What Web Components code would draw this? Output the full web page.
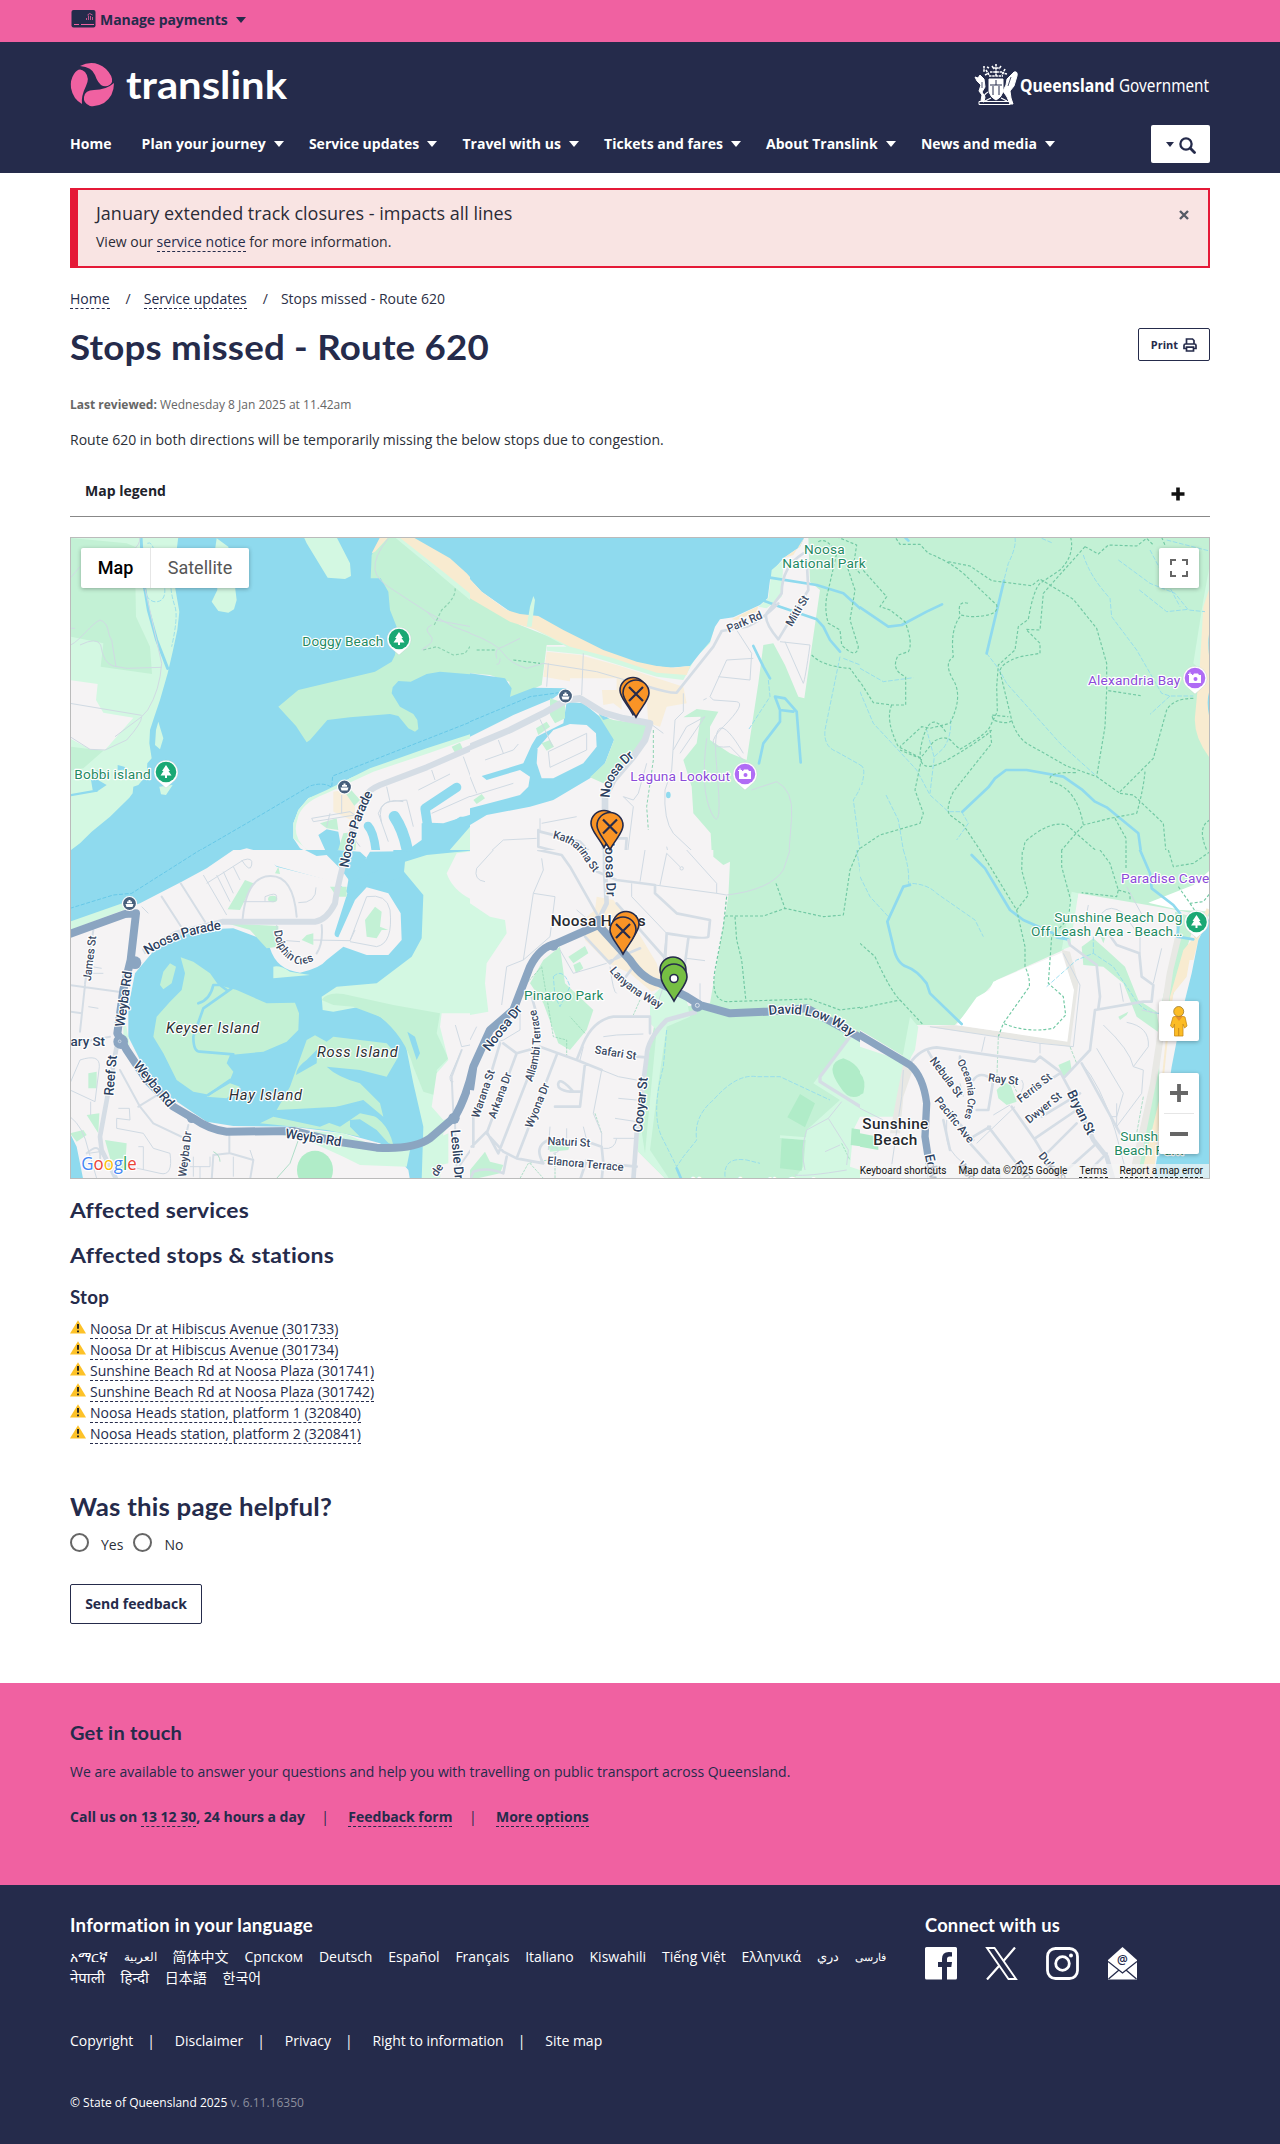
<!DOCTYPE html>
<html lang="en">
<head>
<meta charset="utf-8">
<title>Stops missed - Route 620 | Translink</title>
<style>
body{margin:0;background:#fff;color:#252b4b;font:14px/20px "Open Sans","Noto Sans",sans-serif}
</style>
</head>
<body>
<tl-topbar></tl-topbar>
<tl-header></tl-header>
<tl-alert><span slot="title">January extended track closures - impacts all lines</span>View our <tl-link>service notice</tl-link> for more information.</tl-alert>
<tl-page></tl-page>
<tl-contact></tl-contact>
<tl-footer></tl-footer>
<script>
const base = `*,:host{box-sizing:border-box}:host{display:block}.wrap{width:1140px;margin:0 auto}`;
function define(name, css, html){
  customElements.define(name, class extends HTMLElement{
    constructor(){
      super();
      this.attachShadow({mode:'open'}).innerHTML = `<style>${base}${css}</style>${html}`;
    }
  });
}

define('tl-link', `:host{display:inline;border-bottom:1px dashed #252b4b;color:#252b4b;cursor:pointer}`, `<slot></slot>`);

/* Heading whose glyphs are widened so that it spans the given width. */
customElements.define('tl-heading', class extends HTMLElement{
  connectedCallback(){
    const s=this.getAttribute('size'), lh=this.getAttribute('line');
    this.attachShadow({mode:'open'}).innerHTML=`<style>:host{display:block;font:700 ${s}px/${lh}px Lato,sans-serif;white-space:nowrap}span{display:inline-block;transform-origin:0 50%;letter-spacing:.2px}</style><span><slot></slot></span>`;
    const sp=this.shadowRoot.querySelector('span'), w=+this.getAttribute('span');
    sp.style.transform='scaleX('+(w/sp.getBoundingClientRect().width).toFixed(4)+')';
  }
});

define('tl-caret', `:host{display:inline-block;width:0;height:0;border:5px solid transparent;border-top:6px solid currentColor;border-bottom:0}`, ``);

define('tl-topbar', `:host{background:#f061a1;height:42px}
.wrap{display:flex;align-items:center;height:39px;font-weight:700;gap:4px;padding-left:1px}
svg{display:block;margin-top:-2px}tl-caret{margin-left:4px}span{letter-spacing:-.07px}`,
`<div class="wrap"><svg width="25" height="18" viewBox="0 0 25 18"><rect x=".5" width="24" height="17.500" rx="2" fill="#252b4b"/><path d="M3 14.500h5m2 0h13" stroke="#f061a1" stroke-width="1"/><path d="M15.500 10V8m2 2V5.500m2 4.500V6m2 4V7m-5-2q2-3 5 0" stroke="#f061a1" stroke-width=".8" fill="none"/></svg><span>Manage payments</span><tl-caret></tl-caret></div>`);

define('tl-logo', `svg{display:block;overflow:visible}`,
`<svg width="220" height="52" viewBox="0 0 220 52"><g fill="#f061a1">
<path d="M10 4Q24-3 36 7Q43 14 42 20Q40 25 33 24Q28 22 25 13Q22 5 10 4Z"/>
<path d="M4 12Q9 4 15 10Q20 16 16 24Q11 34 12 42Q3 37 1 26Q0 18 4 12Z"/>
<path d="M44 21Q44 34 34 41Q27 45 20 44Q13 41 14 35Q15 28 24 28Q36 28 44 21Z"/></g>
<text x="56" y="36.500" textLength="161" font-family="Lato" font-weight="700" font-size="39" lengthAdjust="spacingAndGlyphs" fill="#fff">translink</text></svg>`);

define('tl-qld-logo', `svg{display:block;overflow:visible}`,
`<svg width="237" height="44" viewBox="0 0 237 44"><g fill="#fff" stroke="#fff">
<path stroke-width="1" d="M2 15l3 1 2-3 4 4 1 8-3 5 3 5-1 5-3-1 1-6-3-4 2-6-4-4zM41 10q4-1 3 4l-3 10-4 5 1 7 2 6h-3l-3-7-4-6 3-6 1-6z"/>
<path d="M16 17h14v13q-2 6-7 8q-5-2-7-8z"/><path d="M16 14h14M17 10h12M20 6h7M23 2v12M13 8l3 5M32 7l-3 6M12 13l4-2M34 12l-5-1M19 4l2 3M28 4l-2 3M14 5l2 1M11 4v6" fill="none" stroke-width="1.600" stroke-dasharray="2.500 .7"/>
<path d="M15 30q-5 3-5 8M31 30q5 3 5 8M18 36l-6 3M28 36l6 3" fill="none" stroke-width="1.200"/>
<path d="M6 39.500h31v3h-31z" fill="none" stroke-width="1"/></g>
<path d="M17 23h12M23 18v5M20 24v9M26 24v9" stroke="#252b4b" stroke-width="1"/><path d="M9 20v6M38 15l-3 9" stroke="#252b4b" stroke-width=".8"/>
<g fill="#fff" font-family="'Noto Sans','Open Sans'" font-size="17.500"><text x="47" y="30" font-weight="700" textLength="94.500" lengthAdjust="spacingAndGlyphs">Queensland</text><text x="146" y="30" font-weight="400" textLength="90" lengthAdjust="spacingAndGlyphs">Government</text></g></svg>`);

define('tl-nav-item', `:host{display:flex;align-items:center;gap:8px;font-weight:700;white-space:nowrap}:host([plain]) tl-caret{display:none}`, `<slot></slot><tl-caret></tl-caret>`);

define('tl-header', `:host{background:#252b4b;color:#fff;height:131px}
.brand{display:flex;justify-content:space-between;padding-top:20px;height:83px}
nav{display:flex;align-items:center;height:38px}
.items{display:flex;gap:25.200px;flex:1}.items tl-nav-item:first-child{margin-right:5px}
.search{width:59px;height:38px;background:#fff;border-radius:2px;color:#252b4b;display:flex;align-items:center;justify-content:center;gap:5px}
.search svg{margin-top:3px}.search tl-caret{border-width:5px 4.500px 0}`,
`<div class="wrap"><div class="brand"><tl-logo></tl-logo><tl-qld-logo></tl-qld-logo></div>
<nav><div class="items"><tl-nav-item plain>Home</tl-nav-item><tl-nav-item>Plan your journey</tl-nav-item><tl-nav-item>Service updates</tl-nav-item><tl-nav-item>Travel with us</tl-nav-item><tl-nav-item>Tickets and fares</tl-nav-item><tl-nav-item>About Translink</tl-nav-item><tl-nav-item>News and media</tl-nav-item></div>
<div class="search"><tl-caret></tl-caret><svg width="17" height="17" viewBox="0 0 17 17" fill="none" stroke="#252b4b"><circle cx="7" cy="7" r="5.600" stroke-width="2.300"/><path d="M11.300 11.300l4.200 4.200" stroke-width="2.800" stroke-linecap="round"/></svg></div></nav></div>`);

define('tl-alert', `:host{padding-top:15px}
.box{height:80px;border:2px solid #e51937;border-left-width:8px;background:#f9e4e3;padding:11px 18px 0;display:flex;justify-content:space-between;color:#2b2b36}
.title{font-size:18px;line-height:24px;margin-bottom:7px}
svg{margin:9px 1px 0 0}`,
`<div class="wrap box"><div><div class="title"><slot name="title"></slot></div><div><slot></slot></div></div><svg width="10" height="10" viewBox="0 0 10 10"><path d="M1 1l8 8M9 1l-8 8" stroke="#555b66" stroke-width="2.400"/></svg></div>`);

define('tl-crumbs', `:host{display:flex;color:#2b2f45}i{font-style:normal;margin:0 13px 0 16px}`,
`<span><tl-link>Home</tl-link></span><i>/</i><span><tl-link>Service updates</tl-link></span><i>/</i><span>Stops missed - Route 620</span>`);

define('tl-button', `:host{display:inline-flex;align-items:center;justify-content:center;gap:5px;border:1px solid #252b4b;border-radius:2px;font-weight:700;color:#252b4b;white-space:nowrap;background:#fff}`, `<slot></slot>`);

define('tl-accordion', `:host{height:51px;border-bottom:1px solid #888;display:flex;align-items:center;justify-content:space-between;padding:0 25px 0 15px;font-weight:700;color:#20222b}svg{margin-top:5px}`,
`<slot></slot><svg width="14" height="14" viewBox="0 0 14 14"><path d="M7 .5v13M.5 7h13" stroke="#111" stroke-width="3.600"/></svg>`);

define('tl-stop', `:host{display:flex;height:21px;line-height:21px;gap:4px}svg{margin-top:2px}`,
`<svg width="16" height="14" viewBox="0 0 16 14"><path d="M8 .3L16 13.600H0z" fill="#fdc228"/><path d="M8 4v4.800M8 10.400v1.900" stroke="#222" stroke-width="1.900"/></svg><span><tl-link><slot></slot></tl-link></span>`);

define('tl-radio', `:host{display:flex;align-items:center;gap:12px}i{width:19px;height:19px;border:2px solid #666;border-radius:50%;display:block;margin-top:-2px}span{padding-top:3px}`, `<i></i><span><slot></slot></span>`);

/* Map canvas. Six tiles, each with its own units (3 per pixel). */
const tileNW=`<svg x="60" y="530" width="410" height="320" viewBox="0 0 1230 960">
<rect width="1260" height="990" class="w"/>
<path class="lg" d="M30 20H355L350 60 345 170 358 245 352 300 338 365 323 430 300 510 283 560 270 600 268 640 275 685 262 700 260 735 235 765 220 770 218 790 208 803 150 860 95 905 60 940 30 962Z"/>
<path class="p" d="M30 24L200 40 235 55 225 100 228 260 270 350 276 432 122 410 130 340 30 320ZM30 650L130 662 70 715 30 722Z"/>
<path class="l" d="M30 450L113 462 108 510 130 548 220 563 135 660 90 658 30 625Z"/>
<path class="lg" d="M470 25L505 50 525 170 530 210 522 238 505 248 475 243 455 215 472 180 465 60ZM732 22H830L870 100 873 138 855 147 803 143 740 40ZM295 575L310 625 300 658 285 645 288 600ZM298 770L338 765 318 795 303 793Z"/>
<path class="w" d="M173 705l20 5 10 12-15-3-15 2zM110 720l20 10 15 5-40 10 35 20-30 20-12-5-5-30z"/>
<path class="r" d="M243 20L250 150 265 240 290 330 323 415" style="stroke-width:9"/><path class="r" d="M30 796L110 782" style="stroke-width:7"/>
<path class="cr" d="M262 40q20-10 25 60l25 60q10 50-20 55-30 5-45-50M333 175Q335 200 345 230T335 350"/>
<path class="t" d="M32 345C62 330 95 280 120 270 150 280 140 310 155 330L168 410M60 345Q110 320 122 345 130 400 160 408L200 415 305 412M30 295h15M32 143L60 110M240 20Q240 50 215 60M255 175L305 400Q300 480 263 540L245 560 165 620M245 560Q245 580 200 630L135 660 90 658 30 620M30 520L245 556"/>
<path class="p" d="M960 25L935 75 932 145 962 145 985 185 990 240 1010 290 1010 340 1005 375 995 395 945 425 715 480 655 530 708 588 740 637 750 630 802 570 870 562 990 552 1015 558 1045 595 1065 605 1075 597 1072 570 1060 552 1020 530 995 490 998 472 1015 453 1052 455 1100 432 1140 425 1260 435V225L1110 110 1010 22Z"/>
<path class="lg" d="M1005 22L1260 235V210L1110 90 1025 22Z"/><path class="s" d="M1018 22H1060L1170 85 1220 130 1260 175V215L1150 125ZM960 22L935 70 945 65 985 22Z"/>
<path class="t" d="M985 25Q940 80 945 120 950 150 1000 180L1100 245 1180 290 1260 320M1100 245L1125 270 1260 295M1115 285q-25 10-5 30t-20 40q-10 10 10 0"/>
<path class="tr g" d="M1185 175Q1190 200 1145 240L1120 290M1090 360L1130 350 1180 375 1215 370 1230 350 1260 370"/>
<path class="l" d="M1260 610L1100 660 930 720 870 745 800 785 745 805 715 840 700 880V925L720 955 768 980 800 970 775 915 800 898 835 905 850 990H1000L1200 860H1260Z"/>
<path class="lg" d="M1260 603L1100 655 930 715 800 780 745 805 715 840 700 880V925L768 980Q690 930 712 870 720 820 800 790L940 725 1110 668 1260 615Z"/>
<path class="p" d="M865 770L900 810 880 830 850 790ZM780 880L830 865 835 900 800 895ZM850 910L890 905 885 990H825ZM1175 650L1200 638 1208 655 1185 668Z"/>
<path class="c" d="M820 785L850 780 885 830 885 875 820 845Z"/>
<g fill="none" stroke="#8fdaee" stroke-linecap="round" stroke-linejoin="round"><path d="M924 888Q945 910 950 990" stroke-width="26"/><path d="M1003 860Q1030 900 1042 960" stroke-width="34"/><path d="M1190 772L1095 835 1105 900" stroke-width="28"/></g>
<path class="w" d="M1085 880L1110 878 1150 880 1260 845V895L1180 965 1060 990H935L965 965 1000 968 1050 955 1085 930Z"/>
<path class="lg" d="M1230 890L1260 880V990H1050L1165 965Z"/><path class="l" d="M490 990L510 968 560 955 600 965 650 990Z"/>
<path class="t" d="M755 865L870 845 885 855 760 875ZM810 850L800 890M845 795V850M980 770L990 815M965 880Q950 820 990 815L1040 810 1060 890M985 935L955 850Q970 800 1030 815M1210 680L1250 790 1115 850M1115 720L1125 750M1075 780L1170 732M870 910L900 950"/>
<path class="rd" d="M1260 642L1100 712 960 765Q925 780 915 800L870 920V990"/>
<path class="fe" d="M370 990L560 880 750 768Q790 755 815 772L818 738 1260 565"/></svg>`;

const tileN=`<svg x="470" y="530" width="390" height="320" viewBox="0 0 1170 960">
<rect width="1260" height="990" class="l"/>
<path class="p" d="M0 195L60 230 150 285 300 345 230 345 215 465 140 500 120 500 118 455 60 435 0 430Z"/><path class="lg" d="M0 195L170 285 290 350H230V362L350 375 560 440 640 450 740 268 720 340 640 420 550 420Z"/>
<path class="w" d="M0 22H1003L990 50 940 85 915 115 900 150 893 205 870 225 790 262 750 268 735 290 720 335 690 370 660 408 600 413 520 405 400 370 270 320 150 265 35 185 0 148Z"/>
<path class="s" d="M0 148L35 185 110 240 150 252 205 258 280 300 400 360 500 395 560 408 610 413 660 408 650 435 560 428 430 385 300 350 200 300 120 275 60 240 0 205ZM1003 22L970 75 940 85 990 50ZM785 268L865 228 860 245 800 270Z"/>
<path class="lg" d="M190 198L195 210 185 290H170L180 230ZM895 205L905 120 940 90 935 200 890 235 865 230Z"/>
<path class="c" d="M230 365L330 375 440 405 640 470 650 520 590 530 570 590 535 580 530 510 480 500 470 550 430 520 400 525 395 470 220 440Z"/><path class="l" d="M300 445L440 445 440 480 300 480ZM455 510H530V550H455Z"/>
<path class="w" d="M0 430L105 445 125 475 120 500 190 473 290 475 250 505 130 555 0 620Z"/>
<path class="w" d="M290 515L340 520 390 560 425 590 432 630 405 700 360 745 250 810 180 830 50 855 0 885V835L150 795 175 770 180 740 150 720 50 750 35 738 160 700 185 645 200 620 280 580Z"/>
<path class="l" d="M250 600L300 582 350 585 378 610 380 650 340 700 250 745 215 745 200 700 203 655Z"/>
<path class="p" d="M385 555L430 570 540 585 490 690 400 760 360 742 405 700 432 630ZM240 505L285 520 285 565 255 580 240 555ZM198 595L230 575 240 590 205 615ZM215 640L240 630 252 650 230 662ZM10 810L35 792 45 805 20 822Z"/>
<path class="w" d="M385 550L400 557 418 565 400 570Z"/>
<path class="p" d="M1015 22H1260V990H750L725 965 722 910 670 850 665 770 640 690 680 640 692 560 640 562 680 537 745 545 720 590V630L780 670 830 690 865 460 880 345 910 340 945 405 985 500 1003 505 1050 180 1020 155Z"/>
<path class="r" d="M895 142L1040 165 1120 190 1170 235 1260 292M875 210L930 230 1040 268 1060 290 1080 330 1110 365M850 348L880 410 900 445M915 500L945 505 980 545 992 697M915 500L930 540V575L880 640 867 700M930 540L970 545"/>
<path class="cr" d="M1110 380L1065 600Q1060 650 1100 665L1180 710Q1190 750 1150 810L1170 960M895 450L900 500 835 600M1120 385L1260 440"/>
<path class="tr" d="M1045 35Q1070 20 1100 70L1075 180Q1060 230 1075 280L1110 300 1115 345Q1160 390 1165 350L1140 270 1155 180 1125 90M1100 20L1160 45 1150 110 1200 160M1025 375Q1060 410 1140 415L1215 520 1260 525M1150 980Q1180 930 1260 905M20 360H80M130 390L210 400"/>
<path class="t" d="M0 310Q80 340 100 370T170 415L220 400M80 385q-10-30 20-35l50-25M90 385q0 20-10 18M235 400L230 470M340 370L335 495M800 300L845 370 840 450 745 440M770 390L850 385M770 390L720 500 730 510 800 515Q830 520 760 590T780 650L830 700M880 345M945 335L1000 460Q1005 450 1020 345L930 335M640 490L640 545 615 570 605 720 585 780Q580 870 610 910L690 985M610 660L650 590 705 560 630 670M530 700L505 790 490 810 460 800 490 830 470 990M210 865V905M215 880L320 860M45 980L100 930 200 925M700 510L710 505M235 665L350 610V660L240 712ZM210 568L248 650M45 690L130 660 145 642M0 740L20 790M85 630L100 670M0 800L130 760M845 780L920 755Q970 780 965 860L955 990M710 625Q690 780 725 850T740 710 820 670M540 580L580 610M590 950L600 990"/>
<path class="g" d="M550 600V690L530 830 535 900" fill="none" stroke-dasharray="9 6" stroke-width="3"/>
<path class="rm" d="M1000 70Q935 110 935 190L890 250Q880 275 925 328L1015 180 1010 90M925 220Q870 275 830 290L755 303 730 350 620 488Q600 490 535 470M210 905L330 935 390 1000M205 900V950L280 970 300 990M330 935M400 925H470L465 990"/><path class="t" d="M535 470L380 425 220 400"/>
<path class="rd" d="M-10 655L120 600 220 550 290 510 330 505 400 548 460 565 540 580 525 630 490 680 430 750 405 800V990" style="stroke-width:20"/>
<path class="fe" d="M0 575L180 500 290 485"/><ellipse cx="595" cy="795" rx="7" ry="10" class="w"/></svg>`;

const tileNE=`<svg x="860" y="530" width="360" height="320" viewBox="0 0 1080 960">
<rect width="1080" height="990" class="p"/>
<path class="lg" d="M1050 100L1030 210 1000 400 1020 420 1050 300Z"/><path class="s" d="M1050 170L1030 230 1020 400 1005 560Q1000 620 1050 685Z"/><path class="w" d="M1050 300Q1040 330 1050 400ZM1050 480Q1036 510 1050 570Z"/>
<path class="r" d="M0 232L85 290 125 285 200 245 246 223M432 152L380 370M307 845L385 772 405 745 438 720H500L610 740 665 778 705 815 740 832 835 910 842 960 860 1000M135 22L145 32"/>
<path class="cr" d="M465 22Q470 50 445 100L432 150M380 370L415 415 440 460 600 640 720 748M670 75Q690 140 750 205L755 260 830 360 905 490 930 498H1000M930 498L870 553M775 90L870 160 945 190 985 240 1035 245M838 180L920 245 985 238M0 485L40 580 110 655 170 720 210 795 265 845H305L325 880 290 930M272 568Q275 620 250 655L223 680 210 790M222 680L200 600M0 415L70 455 160 443M0 705Q20 710 5 765M78 795L115 870 135 990M920 30L1045 62M870 60L960 230M545 25L575 38"/>
<path class="tr" d="M108 25L120 43H180L205 70Q260 90 310 130L410 225Q420 260 330 260L300 255Q290 210 325 220M265 95L330 108 395 152 515 167 540 147 640 208 710 295 740 400V480L735 590 710 740M745 482L842 497M632 22Q645 75 600 120L540 160Q520 180 505 268L475 290 465 360 415 405 410 470 412 545 390 590Q380 610 330 640L300 658 280 640Q260 610 220 635 190 675 180 685L120 660M675 50L715 72 745 45 830 48 860 25 880 45M675 50L630 100 550 190 540 300 498 298 540 340V370L480 380Q420 400 420 425L455 570Q470 620 500 640L620 708 710 740 780 790M455 572Q440 585 400 570L395 555 445 560M395 600Q380 620 270 685T185 640 260 610M390 600L395 640 280 785Q255 840 270 855L310 885 380 990M0 110L80 200 60 230 90 240 135 275Q160 340 145 365L115 375Q90 420 137 440V525L95 525 40 518 0 455M95 525Q75 570 115 650L185 685 165 780 190 850 180 880 60 915 0 955M300 260Q270 300 280 380 250 400 280 450T270 580L210 595 185 590 120 650M1000 505Q940 505 920 540L880 685 780 785M780 790L820 795 910 880 920 990M855 725Q850 780 830 850L750 865 670 885M570 745Q570 725 650 728M570 755Q650 770 670 885L605 960V990M485 990L495 935Q570 870 620 885L700 955 745 990M765 865L798 925V990M1050 870Q1010 890 1040 960L1005 990M905 22L915 45"/></svg>`;

const tileSW=`<svg x="60" y="850" width="410" height="340" viewBox="0 0 1230 1020">
<rect width="1260" height="1020" class="l"/>
<path class="w" d="M0 0H520L440 55 365 95 240 160 30 235V0ZM30 850L50 890 72 1000H30Z"/><path class="lg" d="M30 215L200 155 230 165 30 240Z"/>
<path class="w" d="M600 0H1260V990H1050L1045 960 1000 910 960 880 850 850 700 830 520 828 440 815 380 775 300 720 245 640 205 560 205 470 225 370 300 280 390 240 520 235 600 265 630 295Q650 360 720 368 780 355 800 330L850 290 920 315 985 315 1025 270 1022 190 985 130 920 112 885 150 835 262Q820 260 825 245L862 130 830 95 770 80 650 50Z"/>
<path class="l" d="M560 0L650 48 830 98 860 120 870 60 940 10 1000 10V0Z"/>
<path class="w" d="M735 0L770 18 800 15 845 60 870 95 960 60 900 5 830 0ZM930 5L1070 3 1170 0 1180 25 1000 90 860 120Z"/>
<path class="lg" d="M1250 0L1100 15 1035 35 1032 65 1090 135 1085 265 1055 320 950 400 830 410 785 440 788 480 820 485 900 470 960 500 1030 550 1060 700 1090 830 1085 990H1260V0Z"/>
<path class="p" d="M785 450Q800 425 850 432L1000 465 1140 490 1130 550 1165 625 1130 660 1140 740 1090 725 1060 650Q1035 560 960 500L880 470 820 465Z"/>
<path class="l" d="M1260 0L1190 10 1160 70Q1180 130 1260 160ZM1260 490L1145 490 1140 530 1165 630 1130 670 1115 770 1150 810 1190 800 1150 850 1140 990H1260Z"/><path class="lg" d="M1120 870L1165 850 1165 940 1120 950ZM640 835L850 850 950 890 1050 900 1040 950 900 945 850 920 740 870 640 850Z"/>
<path class="p" d="M362 322L400 335 450 370 475 405 530 420 620 460 705 458 717 490 715 540 680 575 610 605 510 615 500 640 520 665 510 690 440 733 400 725 350 690 310 610 280 560 290 500 330 455 365 420 375 370ZM330 340L348 350 335 400 310 418 300 405 310 365Z"/>
<path class="p" d="M440 740L510 700 540 710 500 745ZM650 780L690 710 740 570 765 556 800 575 820 560 980 580 1015 620 980 680 900 660 800 650Q830 680 900 700L960 760 970 800 910 750 830 770 750 775ZM600 820L640 800 780 830 900 780Q980 800 1000 885L940 860 870 810 870 830 900 860 800 840Z"/>
<path class="w" d="M708 675Q710 650 740 630L772 598 770 640ZM780 800L830 770 910 765 970 805 900 790 840 830 810 820ZM868 810L900 808 950 840 990 885 900 850ZM1042 545L1065 560 1080 610 1070 630Z"/>
<path class="r" d="M515 415L430 475 400 560Q400 605 420 605L520 613M500 420L480 405H460Q450 450 415 460M510 690L445 735"/>
<path class="p" d="M555 90L580 100 540 180 503 178ZM655 50L645 70 660 72ZM500 220L655 228 655 290 620 295 570 240ZM740 255L760 250 760 285 725 270ZM810 110L860 110 860 140 830 140ZM945 170L965 185 960 230 985 240 965 240 950 265 920 260 915 210ZM85 670L110 665 110 715 85 715ZM80 795L118 790 115 850ZM135 870L200 880 195 960 160 960ZM30 850L70 840 80 855 50 875Z"/><ellipse cx="638" cy="147" rx="14" ry="10" class="p"/><ellipse cx="765" cy="960" rx="54" ry="58" class="dg"/><path class="lg" d="M640 385L640 350Q660 345 690 365L750 375ZM190 480L210 590 190 560Z"/>
<path class="rm" d="M305 140L362 228M362 100L435 215M548 205Q560 80 630 78T710 200M75 405L60 545M30 405L175 425M75 400L100 240M30 485L65 490M785 225Q790 280 770 310M120 930Q125 870 80 910M180 660L240 770 280 820 385 870M150 560L45 580M235 770L300 730M385 825L375 870M508 855V910L460 915 455 990M510 910L580 930 570 990M1205 600L1175 680 1180 790M1185 820L1190 960 1260 860" style="stroke-width:6"/>
<path class="t" d="M245 170L265 190M430 75L500 195M440 100L550 30Q580 20 575 45T545 30M470 75L510 155M490 65L520 130M520 50L540 90M550 155H640Q650 155 650 140T615 140V155M715 158Q770 160 768 112M650 225L655 270 720 275M760 270L870 272 920 140Q980 130 990 180 1000 280 950 290L870 275M870 272L885 240 M95 350L125 355M85 470L115 475M75 370L130 370M30 700L60 630Q120 610 118 650L105 755 30 720M92 755V795M30 800Q70 830 85 900L110 985M85 910L120 905 170 990M175 775H208L210 810 170 805 170 835 250 850 280 895 330 910Q340 980 300 970L210 950M235 890H250V960M400 920V980M390 950H450V920M420 985V950M520 920V980M570 900L580 930M1186 525L1205 590 1230 585 1260 540M1205 600L1170 680Q1170 700 1180 695M1240 45Q1250 80 1260 90"/>
<path class="rd" d="M848 50Q830 120 825 160 800 210 765 215H490L350 250 250 305" style="stroke-width:18"/><path class="rd" d="M170 590L120 860 125 900 170 990" style="stroke-width:14"/>
<path class="hw" d="M20 255L195 192 228 190 212 330 190 420 172 550 200 600 260 690 340 770 400 805Q450 840 500 845L700 843 830 875 950 893Q1060 900 1110 865L1185 800Q1220 740 1240 650L1260 600"/>
<circle cx="225" cy="338" r="19" class="h"/><circle cx="182" cy="575" r="22" class="h"/><circle cx="395" cy="805" r="14" class="h"/><circle cx="1182" cy="805" r="17" class="h"/><circle cx="179" cy="574" r="4" fill="none" stroke="#dde5ee" stroke-width="2"/>
<path class="g" d="M650 985L690 940 715 870M460 905q20 10 20 30" fill="none" stroke-width="2"/>
<path class="fe" d="M30 175L160 135 215 130 420 0"/></svg>`;

const tileS=`<svg x="470" y="850" width="390" height="340" viewBox="0 0 1170 1020">
<rect width="1260" height="1020" class="l"/>
<path class="lg" d="M0 160L60 200 105 210 110 250 50 340 45 400 55 485 0 495Z"/>
<path class="p" d="M730 0H1260V990H590L505 905 510 780 540 590 570 440 640 470 720 460 775 140 780 35 760 45 730 20ZM270 290L285 400 370 480 350 540 300 600 265 580 220 460 180 400 220 330ZM0 960L45 905 60 935 100 945 90 970 0 990Z"/>
<path class="lg" d="M525 910L560 540 540 520 540 450 600 420 650 450 660 500 590 530 565 700 540 900 600 990H590L505 905V780ZM575 410L620 430 655 465 650 490 570 480 540 500 545 440ZM1150 550L1260 620V990H970L1000 950 1010 840 1110 750 1030 700Z"/>
<path class="l" d="M1230 790L1170 800 1150 840 1140 950 1260 990V780Z"/>
<path class="dg" d="M990 732L1035 760 1005 832 952 802ZM935 865L1003 870 995 962 930 955ZM1145 835L1260 850V900L1142 885ZM1120 625Q1190 650 1180 730 1140 760 1110 710 1060 640 1120 625Z"/><path fill="none" stroke="#d3f8e2" stroke-width="8" d="M930 860L1008 866M1045 690L1110 745"/>
<path class="p" d="M295 320L345 288 355 310 310 340ZM310 345L330 335 340 355 318 370ZM235 885L300 885 295 900 240 905Z"/>
<path class="c" d="M345 205L375 180 380 140 430 150 470 200 500 240 560 340 580 410 545 425 480 370 415 340 345 270Z"/>
<path class="cr" d="M590 540L580 650Q540 800 580 870L620 950 640 920 680 870Q670 800 730 750 800 670 860 680L930 680 1080 750M250 380Q280 350 300 410L270 470 255 440ZM765 980Q760 920 830 930L870 940M1160 0L1180 120 1250 210"/><path class="r" d="M620 955L635 990"/>
<path class="tr" d="M770 140L760 230 735 360Q720 450 770 455L1020 447 1110 480 1260 460M765 198H880L945 175 1060 200 1120 195 1140 60 1165 0M918 100L945 175M795 200L800 270 815 330 828 455"/><path class="g" d="M290 620V570L250 560 215 350 170 400M345 550L300 500M510 450L490 495M150 985L175 940 235 930 M255 910V985M375 790L395 850M180 940L220 985M1115 880L1140 930" fill="none" stroke-width="2" stroke-dasharray="8 3"/>
<path class="t" d="M770 135Q900 120 940 60L960 0M770 135L740 130 555 105M215 25L220 60 190 130 160 330 110 350 95 465M190 130L255 140 240 260 160 330M45 95Q10 90 20 55L70 0M485 100V140L590 250M590 250L580 330M525 0L510 95M570 105L590 10 630 50M650 0L740 100V130M320 180L440 280M270 300L310 370 410 340M420 350Q430 430 440 430M650 325L705 332M400 560L440 555 520 552M395 660L445 680 500 690M395 660L370 790 395 850V900M445 745L500 750M435 805L500 815M240 830L235 900M290 835V870M340 830L350 870M440 865Q435 900 400 895M430 865H500M340 590L330 630M580 410L560 470M690 400V460M975 975Q1010 980 1130 960M1010 840Q990 900 1005 960M1010 840L1075 805 1115 755M1075 805L1135 900 1130 945M1065 905L1110 885M150 480V540L100 570 40 590M0 570L20 530M245 900q0-15 15-5t-10 15"/><circle cx="635" cy="55" r="5" fill="none" stroke="#d0dae3" stroke-width="3"/>
<path class="rm" d="M205 0L275 15 300 50 385 200M370 60L440 90 555 105 555 130 620 190 720 210 715 260Q710 270 590 250L585 340M655 265L645 340M440 160L590 330M345 260L420 340 470 290M415 335L510 295M490 350L460 390M185 440L205 510M100 580L140 610 210 590 320 630 340 580Q370 510 430 500L540 500 540 550M320 630L395 660M140 610L50 850 100 905 140 925 260 615M345 640L330 770 255 770M330 725L300 725Q260 720 265 700T310 725M5 890L50 845 85 910 210 590M140 925L220 940Q190 890 235 870M365 880L395 890 400 940 395 990M400 940L500 950M500 620L530 622M350 930L330 990M0 990L10 965Q50 950 100 970L110 920M10 890V800M90 580L30 780"/>
<path class="rd" d="M405 0V60L410 160 385 210M490 990L500 850 530 620Q530 570 590 510L680 485" style="stroke-width:14"/><path class="rd" d="M1140 560L1050 680V695L1260 825" style="stroke-width:10"/>
<path class="hw" d="M0 720L10 650 60 540 130 480 180 350Q210 290 260 280L385 225 480 330Q520 390 570 400L650 440 690 465 780 490 890 485 1010 475 1130 540 1260 615"/><circle cx="385" cy="215" r="18" class="h"/><circle cx="250" cy="287" r="15" class="h"/><circle cx="682" cy="467" r="18" class="h"/><circle cx="682" cy="466" r="6" fill="#8ba5c1" stroke="#fff" stroke-width="2"/></svg>`;

const tileSE=`<svg x="860" y="850" width="360" height="340" viewBox="0 0 1080 1020">
<rect width="1080" height="1020" class="l"/>
<path class="p" d="M0 0H1050V200L950 180 655 130 610 300 410 390 285 525 165 525 150 630 0 540Z"/>
<path class="lg" d="M150 500L175 530 165 600 145 635 125 635ZM635 125L655 130 630 290 605 300ZM0 590L150 640 130 720 100 800 0 800Z"/><path class="dg" d="M0 670Q20 690 10 730L0 735ZM0 850L55 860V900L0 890Z"/><path fill="#e8e8e4" d="M130 640L165 640 130 740 120 850H90L110 740ZM605 300L630 305 655 400 630 590 200 530 280 525 610 570 640 420Z"/>
<path fill="#fff" d="M865 158L1000 105 1050 60V185L960 180ZM400 395L605 308 642 420 622 575 290 525 350 442 388 420Z"/>
<path class="p" d="M665 290L700 265 740 300 795 350 835 450 890 485 900 550 830 500 790 400 730 350 670 345ZM945 185L1010 205 985 280 935 450 900 550 900 480 930 350 950 250ZM595 645L630 630 635 660 610 680ZM410 720L430 700 450 700 470 755 440 765 415 745ZM895 540V620L870 750 810 990H850L900 750ZM775 500L805 485 800 495 780 510ZM720 255L735 265 730 280Z"/>
<path fill="#e8e8e4" d="M945 260L965 260 940 360 900 640 830 990H805L870 700 900 500 920 370Z"/>
<path class="s" d="M1000 265L980 380 940 430 920 600 880 990H840L900 740 930 440 970 300Z"/><path class="s" d="M1050 180L1015 270 1000 330H970L1000 265 1040 175Z"/>
<path class="w" d="M1050 200L1015 270 995 370 970 470 935 650 915 780 880 990H1080V190Z"/>
<path class="r" d="M335 15L375 55 450 180 490 210 620 268M840 0L870 70 875 115 940 165 960 190 952 260 1000 268M150 105L130 110 82 215 100 290Q110 340 140 350T200 400L210 430 305 522M590 262L625 268"/>
<path class="cr" d="M0 80L30 140 85 200M130 0Q150 60 145 100 200 100 230 130L345 210 370 260M560 410L650 330 700 310 760 350 820 440Q850 490 900 490M700 310V260"/>
<path class="tr" d="M0 280L45 320Q90 420 120 450L190 525M0 475L120 450M360 0L470 180 495 290V350Q510 380 508 410L430 520 415 560M470 180L505 135 485 60 487 0M605 0V50L632 150 625 205 575 260 565 400 610 440 617 495 580 535Q500 550 430 520M720 0L750 40 775 120 770 140 665 128M798 0V60M775 120L810 130V150M925 0L940 50 1000 40 1050 5M955 110L990 160 1030 155 1050 130M990 160L1010 190"/>
<path class="g" d="M415 560L410 700M630 590L650 640M460 705l10 20M850 740L830 850" fill="none" stroke-width="2" stroke-dasharray="10 4"/>
<path class="t" d="M210 530L540 580 640 590 660 405 610 310M375 560L365 605M540 580V610M685 165L670 240 680 260M725 190Q750 160 790 190L840 260V310M905 295L880 400M780 400L790 455M800 110L860 220M730 525Q810 600 820 650L850 660 845 730 770 830 770 760M820 650L865 590Q870 530 800 517M665 640Q720 700 765 840L805 990M710 595L790 730 770 800M300 700L310 740M485 690Q500 710 470 745M130 660L125 740 90 980M260 810V860Q260 900 310 940M400 795L450 765M465 770L350 880M770 800h-15M845 480L890 490M0 775L70 810"/>
<path class="rm" d="M150 640Q180 595 230 592L525 635 540 620 600 665 635 730M615 680L690 600 705 480 850 455 875 455 880 405 845 380 838 310 770 285 745 250M625 270L630 285 710 345 720 440 715 475M665 640L780 850M205 605L240 665M240 750L340 870M300 620V650M340 690Q360 660 400 690L385 780H350M455 770L525 870 555 920M600 670L480 745M660 730L545 800M650 780L525 865M650 820L560 910M710 880L620 960M740 910L660 990M385 830L500 980M340 860L390 830 M310 940L340 980M330 880L420 980M250 810L270 900"/>
<path class="rd" d="M635 730L700 870 740 920 760 990" style="stroke-width:14"/>
<path class="hw" d="M-10 550L150 645Q190 680 200 760L195 860 215 990" style="stroke-width:22"/></svg>`;

const mapCss=`:host{height:642px;border:1px solid #bbb;position:relative;overflow:hidden;background:#c3f1d5;font-family:Roboto,sans-serif}
.canvas{display:block}.w{fill:#8fdaee}.l{fill:#f5f3f4}.p{fill:#c3f1d5}.lg{fill:#d3f8e2}.dg{fill:#b0ecc8}.s{fill:#f8ebd0}.c{fill:#f8eedb}.h{fill:#8ba5c1}
.r,.cr,.t,.rm,.rd,.hw,.tr,.fe{fill:none;stroke-linejoin:round}.r{stroke:#8fdaee;stroke-width:8;stroke-linecap:round}.cr{stroke:#8fdaee;stroke-width:2.500;stroke-dasharray:14 5}
.t{stroke:#d0dae3;stroke-width:3}.rm{stroke:#d5dde5;stroke-width:8;stroke-linecap:round}.rd{stroke:#d5dde5;stroke-width:18}.hw{stroke:#8ba5c1;stroke-width:24}
.tr{stroke:#72c9a4;stroke-width:3.500;stroke-dasharray:9 6}.g{stroke:#8dd3b2}.fe{stroke:#5fc4e6;stroke-width:2.500;stroke-dasharray:12 5}
text{paint-order:stroke;stroke:#fff;stroke-width:7px;stroke-linejoin:round;font-size:36px;fill:#3c4a63;font-weight:500}
.poi{font-size:41px;fill:#1f8a63;font-weight:400}.pur{font-size:41px;fill:#8b4bd8;font-weight:400}.isl{font-size:44px;font-style:italic;fill:#2a2f33;font-weight:400}.town{font-size:46px;fill:#26292f}.b{font-size:40px;fill:#2c4160}.sm{font-size:34px}
.ui{position:absolute;background:#fff;box-shadow:0 1px 4px rgba(0,0,0,.3);border-radius:2px}
.types{left:10px;top:10px;height:40px;display:flex;align-items:center;font-size:18px}.types span{display:flex;align-items:center;justify-content:center;height:40px}.types span:first-child{width:70px;color:#000;font-weight:500;border-right:1px solid #e6e6e6}.types span:last-child{width:98px;color:#565656}
.full{right:10px;top:10px;width:40px;height:40px}.peg{right:10px;top:463px;width:40px;height:40px}.zoom{right:10px;top:535px;width:40px;height:81px}.ui svg{display:block}
.legal{position:absolute;right:0;bottom:0;height:14px;display:flex;background:rgba(245,245,245,.7);color:#111;font-size:10px;line-height:14px;padding:0 6px 0 0;gap:12px;white-space:nowrap}.legal u{text-decoration:none;border-bottom:1px dashed #222;height:14px}`;

const pin=(x,y,c,kind)=>`<g transform="translate(${x} ${y})"><path d="M0 0C-6-11-13-17-13-24A13 13 0 0 1 13-24C13-17 6-11 0 0Z" fill="${c}" stroke="#252b4b" stroke-width="1.600"/>${kind==='x'?'<path d="M-7-30L7-16M7-30L-7-16" stroke="#252b4b" stroke-width="2.200"/>':kind==='o'?'<circle cy="-22.500" r="4" fill="#fff" stroke="#252b4b" stroke-width="1.600"/>':''}</g>`;
const spot=(x,y,c,tree)=>`<g transform="translate(${x} ${y})"><path d="M0 16L-7 10A12 12 0 1 1 7 10Z" fill="#fff" stroke="#9aa" stroke-opacity=".3" stroke-width=".7"/><circle r="10.300" fill="${c}"/>${tree?'<path d="M0-7L4-1H2.500L5.500 3.500H1V6H-1V3.500H-5.500L-2.500-1H-4Z" fill="#fff"/>':'<path d="M-6-3H-2L-1-4.500H3L4-3H6V5H-6Z" fill="#fff"/><circle cx=".5" cy="1" r="2" fill="'+c+'"/><path d="M-7-3.500h4M-5-5.500v4" stroke="#fff" stroke-width="1.200"/>'}</g>`;
const ferry=(x,y)=>`<g transform="translate(${x} ${y})"><circle r="7" fill="#48607c" stroke="#fff" stroke-width="1.200"/><path d="M-4 .5H4L3 3.500H-3ZM-2.500-.2V-2H-1V-3.500H1V-2H2.500V-.2" fill="#fff"/></g>`;

const labels=`<g transform="translate(60 530) scale(.33333)">
<text class="poi" x="727" y="348" textLength="243">Doggy Beach</text><text class="poi" x="43" y="747" textLength="229">Bobbi island</text>
<path id="p0" d="M866 1014Q882 900 940 788" fill="none"/><text class="b"><textPath href="#p0" textLength="236">Noosa Parade</textPath></text></g>
<g transform="translate(470 530) scale(.33333)">
<text class="poi" x="1002" y="72" textLength="122">Noosa</text><text class="poi" x="937" y="115" textLength="250">National Park</text>
<text class="sm" transform="translate(776 308) rotate(-23)" textLength="112">Park Rd</text><text class="sm" transform="translate(965 292) rotate(-59)" textLength="102">Mitti St</text>
<path id="p7" d="M420 804Q415 745 496 678" fill="none"/><text class="b"><textPath href="#p7" textLength="150">Noosa Dr</textPath></text><text class="pur" x="481" y="754" textLength="299">Laguna Lookout</text>
<path id="p8" d="M247 925Q315 938 340 985L376 1035" fill="none"/><text class="sm"><textPath href="#p8" textLength="168">Katharina St</textPath></text></g>
<g transform="translate(860 530) scale(.33333)"><text class="pur" x="684" y="466" textLength="277">Alexandria Bay</text></g>
<g transform="translate(60 850) scale(.33333)">
<path id="p1" d="M262 315Q350 255 490 238" fill="none"/><text class="b"><textPath href="#p1" textLength="237">Noosa Parade</textPath></text>
<path id="p2" d="M642 242Q650 320 715 343 750 345 790 312" fill="none"/><text class="sm"><textPath href="#p2" textLength="182">Dolphin Cres</textPath></text>
<text class="sm" transform="translate(92 394) rotate(-83)" textLength="136">James St</text>
<text class="b" transform="translate(193 532) rotate(-82)" textLength="168">Weyba Rd</text><text class="b" x="135" y="588" text-anchor="end">Mary St</text>
<text class="b" transform="translate(160 738) rotate(-85)" textLength="122">Reef St</text><text class="b" transform="translate(218 647) rotate(50)" textLength="166">Weyba Rd</text>
<text class="b" transform="translate(674 863) rotate(9)" textLength="170">Weyba Rd</text><text class="sm" transform="translate(378 982) rotate(-83)" textLength="138">Weyba Dr</text>
<text class="b" transform="translate(1172 840) rotate(85)" textLength="150">Leslie Dr</text><text class="sm" transform="translate(1130 982) rotate(-55)">de</text>
<text class="isl" x="318" y="550" textLength="279">Keyser Island</text><text class="isl" x="771" y="622" textLength="242">Ross Island</text><text class="isl" x="507" y="751" textLength="219">Hay Island</text>
<g style="font-family:'Open Sans',sans-serif"><text x="64" y="960" style="font-size:56px" textLength="166" lengthAdjust="spacingAndGlyphs"><tspan fill="#4285f4">G</tspan><tspan fill="#ea4335">o</tspan><tspan fill="#fbbc05">o</tspan><tspan fill="#4285f4">g</tspan><tspan fill="#34a853">l</tspan><tspan fill="#ea4335">e</tspan></text></g></g>
<g transform="translate(470 850) scale(.33333)">
<text class="b" transform="translate(404 -38) rotate(88)" textLength="178">Noosa Dr</text><text class="town" x="242" y="229" textLength="285">Noosa Heads</text>
<path id="p3" d="M418 362Q470 430 580 480" fill="none"/><text class="sm"><textPath href="#p3" textLength="192">Lanyana Way</textPath></text><text class="poi" x="162" y="450" textLength="238">Pinaroo Park</text>
<text class="b" transform="translate(58 606) rotate(-52)" textLength="162">Noosa Dr</text><path id="p4" d="M186 697Q232 570 194 470" fill="none"/><text class="sm"><textPath href="#p4" textLength="224">Allambi Terrace</textPath></text>
<text class="sm" x="373" y="610" transform="rotate(9 373 610)" textLength="126">Safari St</text><text class="sm" transform="translate(26 806) rotate(-71)" textLength="150">Warana St</text><text class="sm" transform="translate(76 808) rotate(-70)" textLength="145">Arkana Dr</text><text class="sm" transform="translate(186 836) rotate(-68)" textLength="142">Wyona Dr</text>
<text class="b" transform="translate(516 848) rotate(-84)" textLength="166">Cooyar St</text><text class="sm" x="232" y="884" transform="rotate(3 232 884)" textLength="128">Naturi St</text><text class="sm" x="231" y="943" transform="rotate(5 231 943)" textLength="230">Elanora Terrace</text>
<path id="p5" d="M897 495Q1040 475 1142 560" fill="none"/><text class="b"><textPath href="#p5" textLength="262">David Low Way</textPath></text><text class="poi" x="664" y="1010" textLength="410">Noosa Aquatic Centre</text></g>
<g transform="translate(860 850) scale(.33333)">
<text class="pur" x="783" y="99" textLength="265">Paradise Cave</text><text class="poi" x="583" y="217" textLength="384">Sunshine Beach Dog</text><text class="poi" x="513" y="258" textLength="454">Off Leash Area - Beach…</text>
<text class="sm" transform="translate(208 632) rotate(53)" textLength="140">Nebula St</text><path id="p6" d="M290 635Q345 720 310 810" fill="none"/><text class="sm" style="font-size:32px"><textPath href="#p6" textLength="178">Oceania Cres</textPath></text><text class="sm" transform="translate(222 752) rotate(51)" textLength="166">Pacific Ave</text>
<text class="sm" x="383" y="694" transform="rotate(7 383 694)" textLength="92">Ray St</text><text class="sm" transform="translate(482 760) rotate(-38)" textLength="122">Ferris St</text><text class="sm" transform="translate(508 822) rotate(-39)" textLength="128">Dwyer St</text>
<text class="b" transform="translate(620 728) rotate(64)" textLength="144">Bryan St</text><text class="town" x="7" y="838" textLength="198">Sunshine</text><text class="town" x="40" y="886" textLength="132">Beach</text>
<text class="b" transform="translate(194 916) rotate(78)">Edwards St</text><text class="sm" transform="translate(290 945) rotate(52)">Woods</text><text class="sm" transform="translate(462 942) rotate(55)">Elanda</text><text class="sm" transform="translate(534 918) rotate(50)">Duke St</text>
<text class="poi" x="781" y="872">Sunshine</text><text class="poi" x="763" y="915">Beach Park</text></g>`;

define('tl-map', mapCss, `<svg class="canvas" width="1138" height="640" viewBox="71 538 1138 640">
${tileNW}${tileN}${tileNE}${tileSW}${tileS}${tileSE}${labels}
${ferry(344.5,787)}${ferry(565.5,696)}${ferry(129.500,903.500)}
${spot(399,639,'#1aa874',1)}${spot(166,772,'#1aa874',1)}${spot(1196.500,922,'#1aa874',1)}${spot(745,774,'#b06cf5')}${spot(1195,678,'#b06cf5')}
${pin(633,714.500,'#f99426')}${pin(636,717,'#f99426','x')}${pin(604,847.500,'#f99426')}${pin(610,849.500,'#f99426','x')}${pin(626,948.500,'#f99426')}${pin(623,954,'#f99426','x')}${pin(673,994,'#76bf43')}${pin(674,1001,'#76bf43','o')}
</svg>
<div class="ui types"><span>Map</span><span>Satellite</span></div>
<div class="ui full"><svg width="40" height="40" viewBox="0 0 40 40"><path d="M12 17V12H17M23 12H28V17M28 23V28H23M17 28H12V23" fill="none" stroke="#666" stroke-width="2"/></svg></div>
<div class="ui peg"><svg width="40" height="40" viewBox="0 0 40 40"><path d="M14 16Q20 13 26 16L28 25 25.500 27 24 23V35H15.500V23L14 27 11.500 25Z" fill="#fcbc25" stroke="#c98b17" stroke-width=".8"/><path d="M16 15H24L20 20Z" fill="#e8902b"/><circle cx="19.700" cy="10.500" r="5" fill="#fcbc25" stroke="#9a7a30" stroke-width=".8"/><path d="M19.700 27V35" stroke="#c98b17"/></svg></div>
<div class="ui zoom"><svg width="40" height="81" viewBox="0 0 40 81"><path d="M20 11V29M11 20H29M11 61H29" stroke="#666" stroke-width="3.800"/><path d="M5 40.500H35" stroke="#e6e6e6"/></svg></div>
<div class="legal"><span>Keyboard shortcuts</span><span>Map data ©2025 Google</span><u>Terms</u><u>Report a map error</u></div>`);

define('tl-page', `:host{color:#2b2f38}.wrap{height:1415px;display:flex;flex-direction:column}
tl-heading{color:#252b4b}.titles{display:flex;justify-content:space-between;height:40px;margin-top:17px}
.print{height:33px;width:72px;font-size:11px;margin-top:2px}.rev{font-size:12px;color:#666;margin-top:29px}
.intro{margin-top:15px}.list{margin-top:9px}.radios{display:flex;gap:10px;margin-top:11px;height:20px}.send{width:132px;height:40px;margin-top:31px}`,
`<div class="wrap"><tl-crumbs style="margin-top:21px"></tl-crumbs>
<div class="titles"><tl-heading size="34.500" line="41" span="419">Stops missed - Route 620</tl-heading>
<tl-button class="print">Print <svg width="14" height="14" viewBox="0 0 14 14" fill="none" stroke="#252b4b" stroke-width="1.700"><path d="M3.500 6V1H9.500L11 2.500V6M3 10.500H1V7.500Q1 6 2.500 6H11.500Q13 6 13 7.500V10.500H11M3.500 9.200H10.500V13H3.500Z"/></svg></tl-button></div>
<div class="rev"><b>Last reviewed:</b> Wednesday 8 Jan 2025 at 11.42am</div>
<div class="intro">Route 620 in both directions will be temporarily missing the below stops due to congestion.</div>
<tl-accordion style="margin-top:16px">Map legend</tl-accordion>
<tl-map style="margin-top:20px"></tl-map>
<tl-heading size="21.500" line="26" span="179" style="margin-top:18px">Affected services</tl-heading>
<tl-heading size="21.500" line="26" span="264" style="margin-top:19px">Affected stops &amp; stations</tl-heading>
<tl-heading size="18" line="24" span="39" style="margin-top:17px">Stop</tl-heading>
<div class="list"><tl-stop>Noosa Dr at Hibiscus Avenue (301733)</tl-stop><tl-stop>Noosa Dr at Hibiscus Avenue (301734)</tl-stop><tl-stop>Sunshine Beach Rd at Noosa Plaza (301741)</tl-stop><tl-stop>Sunshine Beach Rd at Noosa Plaza (301742)</tl-stop><tl-stop>Noosa Heads station, platform 1 (320840)</tl-stop><tl-stop>Noosa Heads station, platform 2 (320841)</tl-stop></div>
<tl-heading size="24.500" line="30" span="262" style="margin-top:48px">Was this page helpful?</tl-heading>
<div class="radios"><tl-radio>Yes</tl-radio><tl-radio>No</tl-radio></div>
<tl-button class="send">Send feedback</tl-button></div>`);

define('tl-contact', `:host{background:#f061a1;color:#252b4b;height:202px;padding-top:38px}p{margin:17px 0 25px}.row{display:flex;font-weight:700}.row i{font-style:normal;font-weight:400;width:43.500px;padding-right:3px;text-align:center}`,
`<div class="wrap"><tl-heading size="19.500" line="24" span="112">Get in touch</tl-heading><p>We are available to answer your questions and help you with travelling on public transport across Queensland.</p>
<div class="row"><span>Call us on <tl-link>13 12 30</tl-link>, 24 hours a day</span><i>|</i><span><tl-link>Feedback form</tl-link></span><i>|</i><span><tl-link>More options</tl-link></span></div></div>`);

define('tl-social', `:host{display:flex;align-items:center;gap:28px;height:33px;margin-top:10px}svg{display:block}svg:last-child{margin-left:1px}`,
`<svg width="32" height="33" viewBox="0 0 32 33"><path d="M1.500 0H30.500Q32 0 32 1.500V31Q32 32.500 30.500 32.500H22V20H26.300L27 15H22V12Q22 9.500 24.500 9.500H27V5.300Q17 3.500 17 12V15H13V20H17V32.500H1.500Q0 32.500 0 31V1.500Q0 0 1.500 0Z" fill="#fff"/></svg>
<svg width="33" height="33" viewBox="0 0 33 33" fill="none" stroke="#fff"><path d="M2 1H9.500L31 32H23.500Z" stroke-width="1.900"/><path d="M30 .5L18.500 14M14 19L2 32.500" stroke-width="2.200"/></svg>
<svg width="33" height="33" viewBox="0 0 33 33" fill="none" stroke="#fff" stroke-width="2.800"><rect x="1.500" y="1.500" width="30" height="30" rx="8"/><circle cx="16.500" cy="16.500" r="6.800"/><circle cx="25" cy="8.500" r="2" fill="#fff" stroke="none"/></svg>
<svg width="29" height="33" viewBox="0 0 29 33"><path d="M0 13L14.500 0 29 13V32.500H0Z" fill="#fff"/><path d="M0 14.500L14.500 26 29 14.500M.5 32L11 23M28.500 32L18 23" fill="none" stroke="#252b4b" stroke-width="1.300"/><text x="14.500" y="17" text-anchor="middle" font-family="Open Sans" font-size="12" font-weight="600" fill="#252b4b">@</text></svg>`);

define('tl-footer', `:host{background:#252b4b;color:#fff;height:259px}.wrap{height:259px;padding-top:28px;display:flex;flex-direction:column}
.cols{display:flex;justify-content:space-between}.langs{width:840px;display:flex;flex-wrap:wrap;column-gap:15.800px;margin-top:9px}.langs span{height:21px;line-height:21px;white-space:nowrap;font-family:"Open Sans","Noto Sans","Noto Sans CJK SC",sans-serif}
.langs .ar{font-size:11.500px}.langs .fa{font-size:10.800px}.langs .dr{font-size:12.500px}.langs .hi{font-size:15px}
.right{width:285px}.links{display:flex;margin-top:43px}.links i{font-style:normal;margin:0 19.800px 0 14px}.copy{font-size:12px;margin-top:42px}.copy span{color:#8b8e9d}`,
`<div class="wrap"><div class="cols"><div><tl-heading size="18" line="24" span="243">Information in your language</tl-heading>
<div class="langs"><span>አማርኛ</span><span class="ar">العربية</span><span>简体中文</span><span>Српском</span><span>Deutsch</span><span>Español</span><span>Français</span><span>Italiano</span><span>Kiswahili</span><span>Tiếng Việt</span><span>Ελληνικά</span><span class="dr">دري</span><span class="fa">فارسی</span><span class="hi">नेपाली</span><span class="hi">हिन्दी</span><span>日本語</span><span>한국어</span></div></div>
<div class="right"><tl-heading size="18" line="24" span="135">Connect with us</tl-heading><tl-social></tl-social></div></div>
<div class="links">Copyright<i>|</i>Disclaimer<i>|</i>Privacy<i>|</i>Right to information<i>|</i>Site map</div>
<div class="copy">© State of Queensland 2025 <span>v. 6.11.16350</span></div></div>`);
</script>
</body>
</html>
